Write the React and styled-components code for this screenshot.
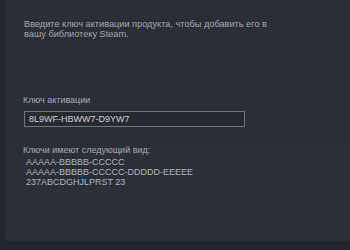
import React from "react";
import styled, { createGlobalStyle } from "styled-components";

const Global = createGlobalStyle`
  html, body {
    margin: 0;
    padding: 0;
    background: #24272e;
    font-family: "Liberation Sans", Arial, sans-serif;
  }
`;

export default function App() {
  return (
    <>
      <Global />
      <Page>
        <Panel>
          <Intro>
            Введите ключ активации продукта, чтобы добавить его в
            <br />
            вашу библиотеку Steam.
          </Intro>
          <Label>Ключ активации</Label>
          <KeyInput defaultValue="8L9WF-HBWW7-D9YW7" />
          <FormatTitle>Ключи имеют следующий вид:</FormatTitle>
          <FormatList>
            <FormatLine>AAAAA-BBBBB-CCCCC</FormatLine>
            <FormatLine>AAAAA-BBBBB-CCCCC-DDDDD-EEEEE</FormatLine>
            <FormatLine>237ABCDGHJLPRST 23</FormatLine>
          </FormatList>
        </Panel>
      </Page>
    </>
  );
}

const Page = styled.div`
  width: 350px;
  height: 250px;
  padding-left: 5px;
  box-sizing: border-box;
  background: #23262d;
`;

const Panel = styled.div`
  height: 241px;
  box-sizing: border-box;
  padding: 19px 0 0 18px;
  background: linear-gradient(180deg, #2a2d35 0%, #2b2f38 100%);
  color: #a9acb2;
  font-size: 9px;
  line-height: 10px;
`;

const Intro = styled.div`
  padding-left: 1px;
  font-size: 9.2px;
  line-height: 10px;
  white-space: nowrap;
  color: #a5a8ae;
`;

const Label = styled.div`
  margin-top: 56px;
  color: #a9acb2;
`;

const KeyInput = styled.input`
  display: block;
  margin: 6px 0 0 1px;
  width: 221px;
  height: 16px;
  box-sizing: border-box;
  padding: 0 4px;
  border: 1px solid #6f737a;
  background: #262930;
  color: #d0d2d5;
  font-family: "Liberation Sans", Arial, sans-serif;
  font-size: 9px;
  outline: none;
`;

const FormatTitle = styled.div`
  margin-top: 18px;
  color: #a9acb2;
`;

const FormatList = styled.div`
  margin-top: 2px;
  padding-left: 3px;
`;

const FormatLine = styled.div`
  color: #b2b5ba;
`;
